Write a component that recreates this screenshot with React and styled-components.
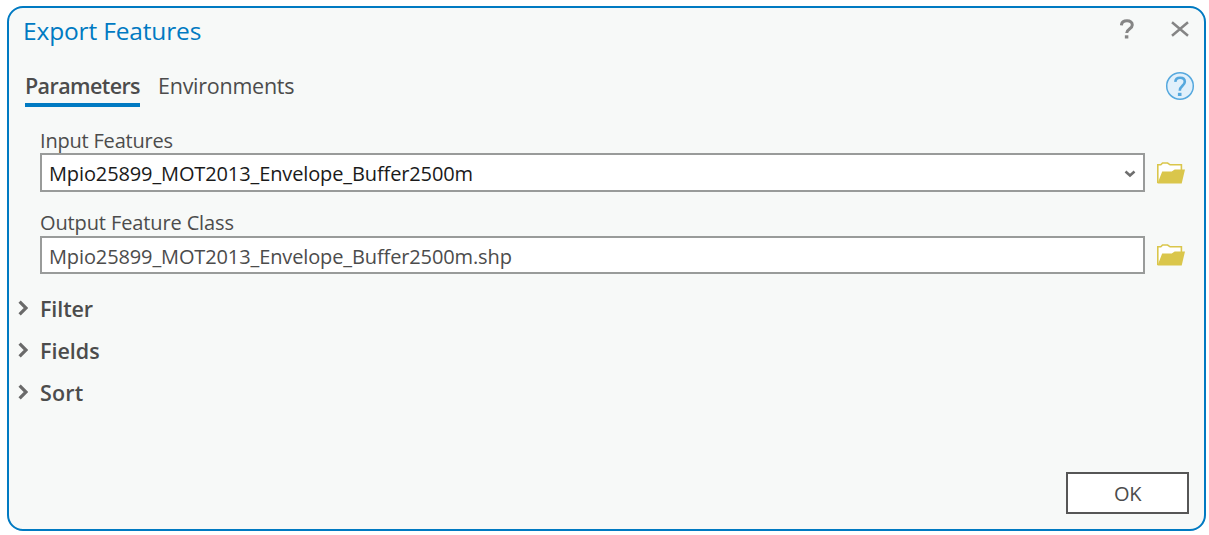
import React from 'react';
import styled, { createGlobalStyle } from 'styled-components';

const GlobalStyle = createGlobalStyle`
  * { box-sizing: border-box; }
  body {
    margin: 0;
    background: #fff;
    font-family: 'Open Sans', 'Noto Sans', sans-serif;
    color: #4c4c4c;
  }
  button { font: inherit; color: inherit; background: none; border: 0; padding: 0; margin: 0; }
  svg { display: block; flex: none; }
`;

const Page = styled.div`
  height: 535px;
  padding: 6px 3px 4px 7px;
`;

const Dialog = styled.section`
  height: 525px;
  display: flex;
  flex-direction: column;
  background: #f7f9f8;
  border: 2px solid #007ac2;
  border-radius: 16px;
`;

const TitleBar = styled.header`
  display: flex;
  align-items: center;
  height: 46px;
  padding: 0 15px 0 14px;
`;

const Title = styled.h1`
  flex: 1;
  margin: 0;
  font-size: 24.5px;
  font-weight: 400;
  line-height: 46px;
  letter-spacing: -0.15px;
  color: #007ac2;
`;

const WindowButtons = styled.div`
  display: flex;
  align-items: flex-start;
  gap: 37px;
  margin-top: -5px;
`;

const TabRow = styled.div`
  display: flex;
  align-items: center;
  justify-content: space-between;
  height: 53px;
  padding: 0 9px 0 16px;
`;

const Tabs = styled.nav`
  display: flex;
  gap: 18px;
  height: 53px;
`;

const Tab = styled.button`
  height: 53px;
  width: ${(p) => p.$width}px;
  white-space: nowrap;
  text-align: left;
  font-size: 21.5px;
  font-weight: ${(p) => (p.$active ? 600 : 400)};
  letter-spacing: ${(p) => p.$track || 0}px;
  border-bottom: 4px solid ${(p) => (p.$active ? '#007ac2' : 'transparent')};
  line-height: 30px;
  padding-top: 15px;
`;

const HelpButton = styled.button`
  margin-top: 10px;
`;

const Form = styled.div`
  padding: 20px 19px 0 31px;
`;

const Field = styled.div`
  height: ${(p) => p.$height}px;
`;

const Label = styled.label`
  display: block;
  height: ${(p) => p.$height}px;
  line-height: 28px;
  font-size: 20px;
  letter-spacing: ${(p) => p.$track || 0}px;
`;

const InputRow = styled.div`
  display: flex;
  align-items: center;
  gap: 12px;
`;

const InputBox = styled.div`
  flex: 1;
  display: flex;
  align-items: center;
  justify-content: space-between;
  height: ${(p) => p.$height}px;
  padding: 2px 7px 0 7px;
  border: 2px solid #999b9a;
  background: #fff;
  color: ${(p) => p.$color};
  font-size: 20px;
  letter-spacing: -0.12px;
`;

const BrowseButton = styled.button`
  padding-bottom: ${(p) => p.$lift || 0}px;
`;

const Sections = styled.div`
  flex: 1;
  padding: 13px 0 0 9px;
`;

const SectionHeader = styled.div`
  display: flex;
  align-items: center;
  gap: 12px;
  height: 42px;
`;

const SectionName = styled.span`
  padding-top: 1px;
  font-size: 21.5px;
  font-weight: 600;
  letter-spacing: ${(p) => p.$track || 0}px;
`;

const Footer = styled.footer`
  display: flex;
  justify-content: flex-end;
  padding: 0 15px 15px 0;
`;

const OkButton = styled.button`
  width: 123px;
  height: 42px;
  border: 2px solid #565656;
  background: #fff;
  font-size: 20px;
  letter-spacing: -0.4px;
`;

const QuestionIcon = () => (
  <svg width="14" height="20" viewBox="0 0 14 20" fill="none" stroke="#858585" strokeWidth="3">
    <path d="M1.4 6.3C1.6 3.1 3.8 1.8 7 1.8c3.300 0 5.300 1.500 5.300 4.100 0 4.100-5.600 4-5.600 8" />
    <path d="M6.600 16.300v3.200" strokeWidth="3.500" />
  </svg>
);

const CloseIcon = () => (
  <svg width="18" height="20" viewBox="0 0 18 20" fill="none" stroke="#858585" strokeWidth="2.500">
    <path d="M1 3.300l16 13.400M17 3.300L1 16.700" />
  </svg>
);

const HelpIcon = () => (
  <svg width="30" height="30" viewBox="0 0 30 30" fill="none" stroke="#55a8de">
    <circle cx="15" cy="15" r="13.300" fill="#e1f0fb" strokeWidth="1.500" />
    <path d="M10.300 10.800C10.500 8 12.200 6.700 15.100 6.700c2.900 0 4.700 1.500 4.700 4 0 4.200-5 4.100-5 9.100" strokeWidth="2.600" />
    <path d="M14.700 21.800v3.200" strokeWidth="3.600" />
  </svg>
);

const FolderIcon = () => (
  <svg width="28" height="22" viewBox="0 0 28 22">
    <path d="M.8 21V2.800h3L5.600 1h5l2.500 1.800h11.300V8" fill="#fff" stroke="#dac64b" strokeWidth="1.600" />
    <path d="M.5 21.600L5.200 9.400h9.500l3-2H28l-3.300 14.200z" fill="#dac64b" />
  </svg>
);

const DownIcon = () => (
  <svg width="12" height="8" viewBox="0 0 12 8" fill="none" stroke="#6e6e6e" strokeWidth="2.500">
    <path d="M1.500 1.500l4.500 4 4.500-4" />
  </svg>
);

const RightIcon = () => (
  <svg width="10" height="16" viewBox="0 0 10 16" fill="none" stroke="#6a6a6a" strokeWidth="3.200">
    <path d="M1.600 1.600L8 8l-6.400 6.400" />
  </svg>
);

const sections = [
  { name: 'Filter', track: -0.1 },
  { name: 'Fields', track: 0 },
  { name: 'Sort', track: 0.2 },
];

export default function App() {
  return (
    <>
      <GlobalStyle />
      <Page>
        <Dialog>
          <TitleBar>
            <Title>Export Features</Title>
            <WindowButtons>
              <button aria-label="Help"><QuestionIcon /></button>
              <button aria-label="Close"><CloseIcon /></button>
            </WindowButtons>
          </TitleBar>
          <TabRow>
            <Tabs>
              <Tab $active $width={115} $track={-0.6}>Parameters</Tab>
              <Tab $width={137} $track={-0.25}>Environments</Tab>
            </Tabs>
            <HelpButton aria-label="Tool help"><HelpIcon /></HelpButton>
          </TabRow>
          <Form>
            <Field $height={82}>
              <Label $height={26} $track={-0.2}>Input Features</Label>
              <InputRow>
                <InputBox $height={39} $color="#1a1a1a">
                  <span>Mpio25899_MOT2013_Envelope_Buffer2500m</span>
                  <DownIcon />
                </InputBox>
                <BrowseButton aria-label="Browse input"><FolderIcon /></BrowseButton>
              </InputRow>
            </Field>
            <Field $height={65}>
              <Label $height={27} $track={-0.12}>Output Feature Class</Label>
              <InputRow>
                <InputBox $height={38} $color="#4c4c4c">
                  <span>Mpio25899_MOT2013_Envelope_Buffer2500m.shp</span>
                </InputBox>
                <BrowseButton $lift={1} aria-label="Browse output"><FolderIcon /></BrowseButton>
              </InputRow>
            </Field>
          </Form>
          <Sections>
            {sections.map((s) => (
              <SectionHeader key={s.name}>
                <RightIcon />
                <SectionName $track={s.track}>{s.name}</SectionName>
              </SectionHeader>
            ))}
          </Sections>
          <Footer>
            <OkButton>OK</OkButton>
          </Footer>
        </Dialog>
      </Page>
    </>
  );
}
